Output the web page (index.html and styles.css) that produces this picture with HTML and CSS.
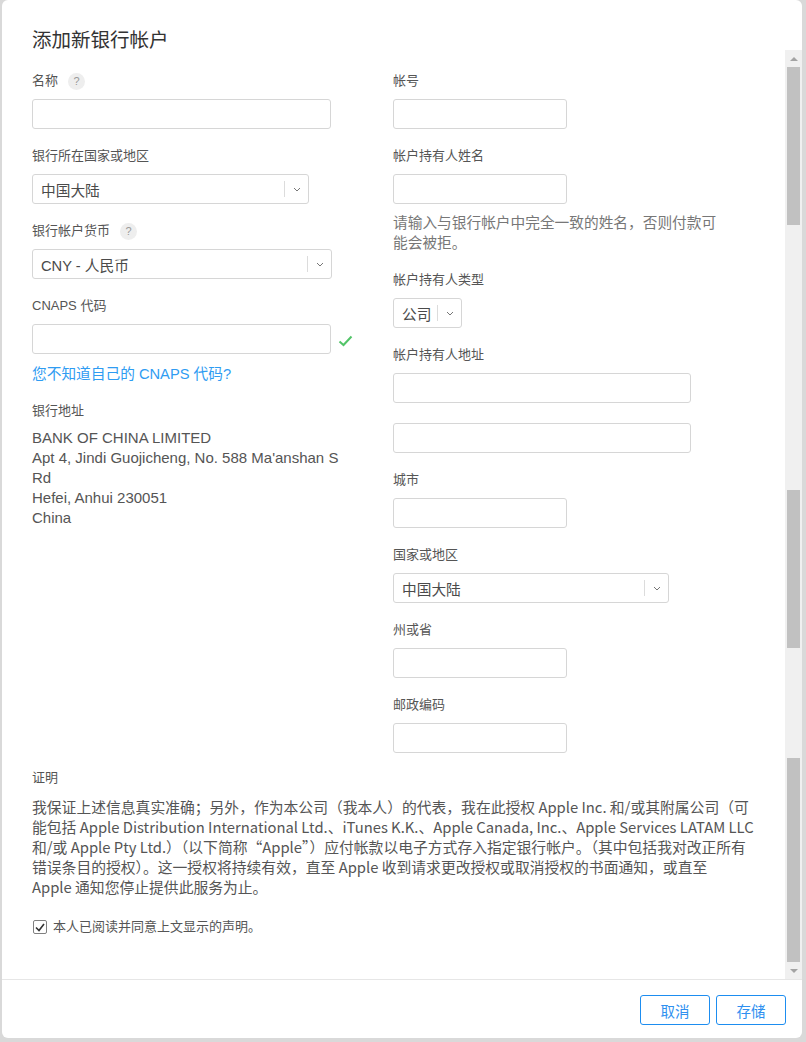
FILE: index.html
```html
<!DOCTYPE html>
<html lang="zh-CN">
<head>
<meta charset="UTF-8">
<meta name="viewport" content="width=device-width, initial-scale=1.0">
<title>添加新银行帐户</title>
<link rel="stylesheet" href="styles.css">
</head>
<body>

<div class="modal">
  <div class="modal-head">
    <h1 class="title">添加新银行帐户</h1>
  </div>

  <div class="modal-body">
    <div class="scroll-content">
      <div class="columns">

        <!-- 左栏：银行信息 -->
        <div class="col col-left">
          <div class="field">
            <div class="label">名称 <span class="help">?</span></div>
            <input class="input w-299" type="text">
          </div>
          <div class="field">
            <div class="label">银行所在国家或地区</div>
            <div class="select w-277">
              <span class="select-text">中国大陆</span>
              <span class="select-bar"></span>
              <span class="select-arrow"><svg width="8" height="5" viewBox="0 0 8 5"><path d="M1 1 L4 4 L7 1" fill="none" stroke="#777" stroke-width="1"/></svg></span>
            </div>
          </div>
          <div class="field">
            <div class="label">银行帐户货币 <span class="help">?</span></div>
            <div class="select w-300">
              <span class="select-text">CNY - 人民币</span>
              <span class="select-bar"></span>
              <span class="select-arrow"><svg width="8" height="5" viewBox="0 0 8 5"><path d="M1 1 L4 4 L7 1" fill="none" stroke="#777" stroke-width="1"/></svg></span>
            </div>
          </div>
          <div class="field">
            <div class="label">CNAPS 代码</div>
            <div class="input-row">
              <input class="input w-299" type="text">
              <svg class="ok" width="15" height="12" viewBox="0 0 15 12"><path d="M1.5 6.5 L5.5 10 L13.5 1.5" fill="none" stroke="#52c468" stroke-width="2"/></svg>
            </div>
            <a class="link" href="#">您不知道自己的 CNAPS 代码?</a>
          </div>
          <div class="field">
            <div class="label">银行地址</div>
            <div class="address">
              BANK OF CHINA LIMITED<br>
              Apt 4, Jindi Guojicheng, No. 588 Ma'anshan S Rd<br>
              Hefei, Anhui 230051<br>
              China
            </div>
          </div>
        </div>

        <!-- 右栏：帐户持有人 -->
        <div class="col col-right">
          <div class="field">
            <div class="label">帐号</div>
            <input class="input w-174" type="text">
          </div>
          <div class="field">
            <div class="label">帐户持有人姓名</div>
            <input class="input w-174" type="text">
            <p class="hint">请输入与银行帐户中完全一致的姓名，否则付款可能会被拒。</p>
          </div>
          <div class="field">
            <div class="label">帐户持有人类型</div>
            <div class="select w-69">
              <span class="select-text">公司</span>
              <span class="select-bar"></span>
              <span class="select-arrow"><svg width="8" height="5" viewBox="0 0 8 5"><path d="M1 1 L4 4 L7 1" fill="none" stroke="#777" stroke-width="1"/></svg></span>
            </div>
          </div>
          <div class="field">
            <div class="label">帐户持有人地址</div>
            <input class="input w-298" type="text">
            <input class="input w-298 next" type="text">
          </div>
          <div class="field">
            <div class="label">城市</div>
            <input class="input w-174" type="text">
          </div>
          <div class="field">
            <div class="label">国家或地区</div>
            <div class="select w-276">
              <span class="select-text">中国大陆</span>
              <span class="select-bar"></span>
              <span class="select-arrow"><svg width="8" height="5" viewBox="0 0 8 5"><path d="M1 1 L4 4 L7 1" fill="none" stroke="#777" stroke-width="1"/></svg></span>
            </div>
          </div>
          <div class="field">
            <div class="label">州或省</div>
            <input class="input w-174" type="text">
          </div>
          <div class="field">
            <div class="label">邮政编码</div>
            <input class="input w-174" type="text">
          </div>
        </div>
      </div>

      <!-- 声明 -->
      <div class="declare">
        <div class="label">证明</div>
        <p class="legal">我保证上述信息真实准确；另外，作为本公司（我本人）的代表，我在此授权 Apple Inc. 和/或其附属公司（可<br>能包括 Apple Distribution International Ltd.、iTunes K.K.、Apple Canada, Inc.、Apple Services LATAM LLC<br>和/或 Apple Pty Ltd.）（以下简称“Apple”）应付帐款以电子方式存入指定银行帐户。（其中包括我对改正所有<br>错误条目的授权）。这一授权将持续有效，直至 Apple 收到请求更改授权或取消授权的书面通知，或直至<br>Apple 通知您停止提供此服务为止。</p>
        <label class="agree">
          <span class="checkbox"><svg width="10" height="9" viewBox="0 0 10 9"><path d="M1 4.5 L4 7.5 L9 1" fill="none" stroke="#333" stroke-width="1.6"/></svg></span>
          本人已阅读并同意上文显示的声明。
        </label>
      </div>
    </div>

    <!-- 滚动条 -->
    <div class="scrollbar">
      <div class="sb-btn sb-up"><span class="tri-up"></span></div>
      <div class="thumb thumb-a"></div>
      <div class="sb-gap gap-a"></div>
      <div class="thumb thumb-b"></div>
      <div class="sb-gap gap-b"></div>
      <div class="thumb thumb-c"></div>
      <div class="sb-btn sb-down"><span class="tri-down"></span></div>
    </div>
  </div>

  <div class="modal-foot">
    <button class="btn">取消</button>
    <button class="btn">存储</button>
  </div>
</div>

</body>
</html>
```

FILE: styles.css
```css
body, html {
  margin: 0;
  padding: 0;
  height: 100%;
  overflow: hidden;
}

body {
  background-color: #d9d9d9;
  font-family: "Liberation Sans", "Noto Sans CJK SC", sans-serif;
  color: #555;
}

.modal {
  margin-left: 2px;
  width: 800px;
  height: 1038px;
  background-color: #fff;
  border-radius: 6px;
  overflow: hidden;
  display: flex;
  flex-direction: column;
}

.modal-head {
  height: 50px;
  padding: 28px 0 0 30px;
  box-sizing: border-box;
}

.title {
  margin: 0;
  font-size: 19.5px;
  line-height: 24px;
  font-weight: normal;
  color: #333;
}

.modal-body {
  height: 929px;
  display: flex;
}

.scroll-content {
  flex: 1;
  padding: 23px 0 0 30px;
  overflow: hidden;
}

.columns {
  display: flex;
  align-items: flex-start;
  gap: 46px;
}

.col-left {
  width: 315px;
}

.col-right {
  width: 330px;
}

.field {
  margin-bottom: 19px;
}

.col-right .field:last-child {
  margin-bottom: 17px;
}

.label {
  display: flex;
  align-items: center;
  font-size: 13px;
  line-height: 16px;
  height: 16px;
  margin-bottom: 10px;
  color: #555;
}

.help {
  display: inline-flex;
  align-items: center;
  justify-content: center;
  width: 17px;
  height: 17px;
  margin-left: 10px;
  border-radius: 50%;
  background-color: #eeeeee;
  color: #999;
  font-size: 11px;
}

.input {
  display: block;
  height: 30px;
  box-sizing: border-box;
  margin: 0;
  border: 1px solid #d6d6d6;
  border-radius: 3px;
  background-color: #fff;
}

.input.next {
  margin-top: 20px;
}

.w-299 { width: 299px; }
.w-298 { width: 298px; }
.w-300 { width: 300px; }
.w-277 { width: 277px; }
.w-276 { width: 276px; }
.w-174 { width: 174px; }
.w-69  { width: 69px; }

.select {
  display: flex;
  align-items: center;
  height: 30px;
  box-sizing: border-box;
  border: 1px solid #d6d6d6;
  border-radius: 3px;
  font-size: 14.7px;
  color: #4a4a4a;
}

.select-text {
  flex: 1;
  padding-left: 8px;
  white-space: nowrap;
}

.select-bar {
  width: 1px;
  height: 16px;
  background-color: #dcdcdc;
}

.select-arrow {
  width: 23px;
  display: flex;
  justify-content: center;
  align-items: center;
}

.input-row {
  display: flex;
  align-items: center;
  gap: 7px;
}

.input-row .input,
.input-row .ok {
  flex-shrink: 0;
}

.ok {
  margin-top: 3px;
}

.link {
  display: block;
  margin-top: 10px;
  font-size: 14.7px;
  line-height: 20px;
  color: #2f9cf2;
  text-decoration: none;
}

.address {
  margin-top: -1px;
  font-size: 15px;
  line-height: 20px;
  color: #555;
}

.hint {
  margin: 9px 0 0 0;
  font-size: 14.7px;
  line-height: 20px;
  color: #777;
}

.declare .label {
  margin-bottom: 11px;
}

.legal {
  margin: 0;
  font-family: "Noto Sans CJK SC", sans-serif;
  font-size: 14.8px;
  line-height: 20px;
  color: #555;
  white-space: nowrap;
}

.agree {
  display: flex;
  align-items: center;
  gap: 6px;
  margin-top: 20px;
  font-size: 13px;
  line-height: 20px;
  color: #555;
}

.checkbox {
  display: inline-flex;
  align-items: center;
  justify-content: center;
  width: 14px;
  height: 14px;
  margin-left: 1px;
  box-sizing: border-box;
  border: 1px solid #808080;
  border-radius: 2px;
}

/* 滚动条 */
.scrollbar {
  width: 17px;
  background-color: #f0f0f0;
  display: flex;
  flex-direction: column;
}

.sb-btn {
  display: flex;
  justify-content: center;
  align-items: center;
}

.sb-up { height: 17px; }
.sb-down { height: 17px; }

.tri-up {
  width: 0;
  height: 0;
  border-left: 4px solid transparent;
  border-right: 4px solid transparent;
  border-bottom: 4px solid #a3a3a3;
}

.tri-down {
  width: 0;
  height: 0;
  border-left: 4px solid transparent;
  border-right: 4px solid transparent;
  border-top: 4px solid #a3a3a3;
}

.thumb {
  margin: 0 2px;
  background-color: #c1c1c1;
}

.thumb-a { height: 158px; }
.gap-a { height: 265px; }
.thumb-b { height: 158px; }
.gap-b { height: 110px; }
.thumb-c { height: 204px; }

.modal-foot {
  flex: 1;
  border-top: 1px solid #e6e6e6;
  padding: 15px 16px 0 0;
  display: flex;
  justify-content: flex-end;
  align-items: flex-start;
  gap: 6px;
}

.btn {
  width: 70px;
  height: 30px;
  border: 1px solid #1d8df0;
  border-radius: 3px;
  background-color: #fff;
  color: #2f90f0;
  font-family: "Noto Sans CJK SC", sans-serif;
  font-size: 14.5px;
  cursor: pointer;
}
```
